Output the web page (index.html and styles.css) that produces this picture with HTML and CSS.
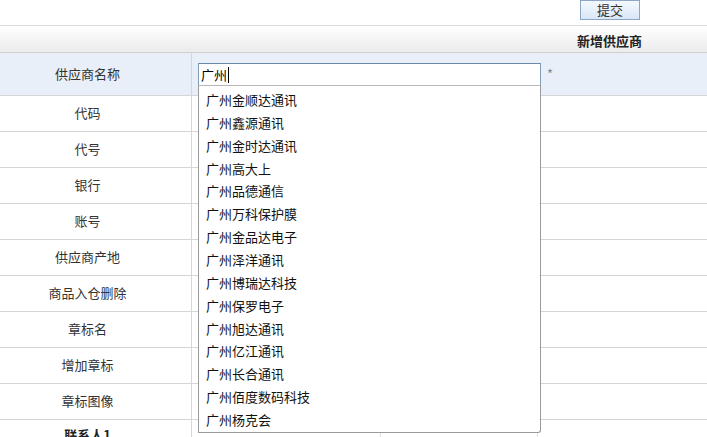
FILE: index.html
```html
<!DOCTYPE html>
<html lang="zh-CN">
<head>
<meta charset="utf-8">
<title>新增供应商</title>
<link rel="stylesheet" href="styles.css">
</head>
<body>
<div class="topbar">
  <button class="btn">提交</button>
</div>
<div class="caption">新增供应商</div>
<div class="form">
  <div class="row row-first">
    <div class="label">供应商名称</div>
    <div class="field">
      <div class="combo">
        <div class="input">广州<span class="caret"></span></div>
        <ul class="suggest">
          <li>广州金顺达通讯</li>
          <li>广州鑫源通讯</li>
          <li>广州金时达通讯</li>
          <li>广州高大上</li>
          <li>广州品德通信</li>
          <li>广州万科保护膜</li>
          <li>广州金品达电子</li>
          <li>广州泽洋通讯</li>
          <li>广州博瑞达科技</li>
          <li>广州保罗电子</li>
          <li>广州旭达通讯</li>
          <li>广州亿江通讯</li>
          <li>广州长合通讯</li>
          <li>广州佰度数码科技</li>
          <li>广州杨克会</li>
        </ul>
      </div>
      <span class="req">*</span>
    </div>
  </div>
  <div class="row"><div class="label">代码</div><div class="field"></div></div>
  <div class="row"><div class="label">代号</div><div class="field"></div></div>
  <div class="row"><div class="label">银行</div><div class="field"></div></div>
  <div class="row"><div class="label">账号</div><div class="field"></div></div>
  <div class="row"><div class="label">供应商产地</div><div class="field"></div></div>
  <div class="row"><div class="label">商品入仓删除</div><div class="field"></div></div>
  <div class="row"><div class="label">章标名</div><div class="field"></div></div>
  <div class="row"><div class="label">增加章标</div><div class="field"></div></div>
  <div class="row"><div class="label">章标图像</div><div class="field"></div></div>
  <div class="row row-contact">
    <div class="label bold">联系人1</div>
    <div class="field split">
      <div class="cell"></div><div class="cell"></div><div class="cell"></div>
    </div>
  </div>
</div>
</body>
</html>
```

FILE: styles.css
```css
* { box-sizing: border-box; }
html, body { margin: 0; padding: 0; background: #fff; overflow: hidden; }
body {
  font-family: "Noto Sans CJK SC", "Liberation Sans", sans-serif;
  font-size: 13px;
  color: #333;
}
.topbar {
  height: 26px;
  border-bottom: 1px solid #dcdcdc;
  display: flex;
  justify-content: flex-end;
  padding-right: 67px;
}
.btn {
  width: 60px;
  height: 20px;
  margin: 0;
  padding: 0;
  border: 1px solid #8ea6c6;
  background: linear-gradient(#f5f9fe, #d9e7f7);
  font-family: "Noto Sans CJK SC", sans-serif;
  font-size: 13px;
  line-height: 16px;
  color: #333;
}
.caption {
  height: 27px;
  border-bottom: 1px solid #d0d0d0;
  background: linear-gradient(#ffffff, #ebebeb);
  text-align: right;
  padding-right: 65px;
  padding-top: 6px;
  font-weight: bold;
  line-height: 17px;
  color: #222;
}
.row {
  display: grid;
  grid-template-columns: 192px 1fr;
  height: 36px;
  border-bottom: 1px solid #d6d6d6;
}
.row-first {
  height: 43px;
  background: #e9eff8;
}
.label {
  border-right: 1px solid #d6d6d6;
  display: flex;
  align-items: center;
  justify-content: center;
  padding-right: 16px;
  padding-bottom: 2px;
  color: #333;
}
.row-contact .label {
  align-items: flex-start;
  padding-top: 5px;
}
.bold { font-weight: bold; color: #222; }
.field {
  display: flex;
  align-items: flex-start;
  padding-left: 6px;
}
.row-first .field { padding-top: 10px; }
.combo {
  position: relative;
  width: 343px;
}
.input {
  height: 23px;
  border: 1px solid #7f9db9;
  border-top-color: #6a8aac;
  background: #fff;
  padding-left: 2px;
  line-height: 21px;
  color: #000;
  display: flex;
  align-items: center;
}
.caret {
  display: inline-block;
  width: 1px;
  height: 16px;
  background: #000;
  margin-left: 1px;
}
.suggest {
  position: absolute;
  left: 0;
  top: 22px;
  width: 343px;
  margin: 0;
  padding: 3px 0 0 0;
  list-style: none;
  background: #fff;
  border: 1px solid #9a9a9a;
  border-top: 1px solid #b8b8b8;
  border-bottom-right-radius: 3px;
  z-index: 5;
  height: 348px;
}
.suggest li {
  height: 22.86px;
  line-height: 22.86px;
  padding-left: 7px;
  color: #111;
}
.req {
  margin-left: 6px;
  margin-top: 1px;
  color: #8a8a8a;
  font-size: 13px;
  line-height: 20px;
}
.split { padding-left: 0; }
.split .cell { flex: 0 0 188px; border-right: 1px solid #e2e2e2; height: 100%; }
.split .cell:first-child { flex-basis: 189px; }
.split .cell:nth-child(2) { flex-basis: 157px; }
```
